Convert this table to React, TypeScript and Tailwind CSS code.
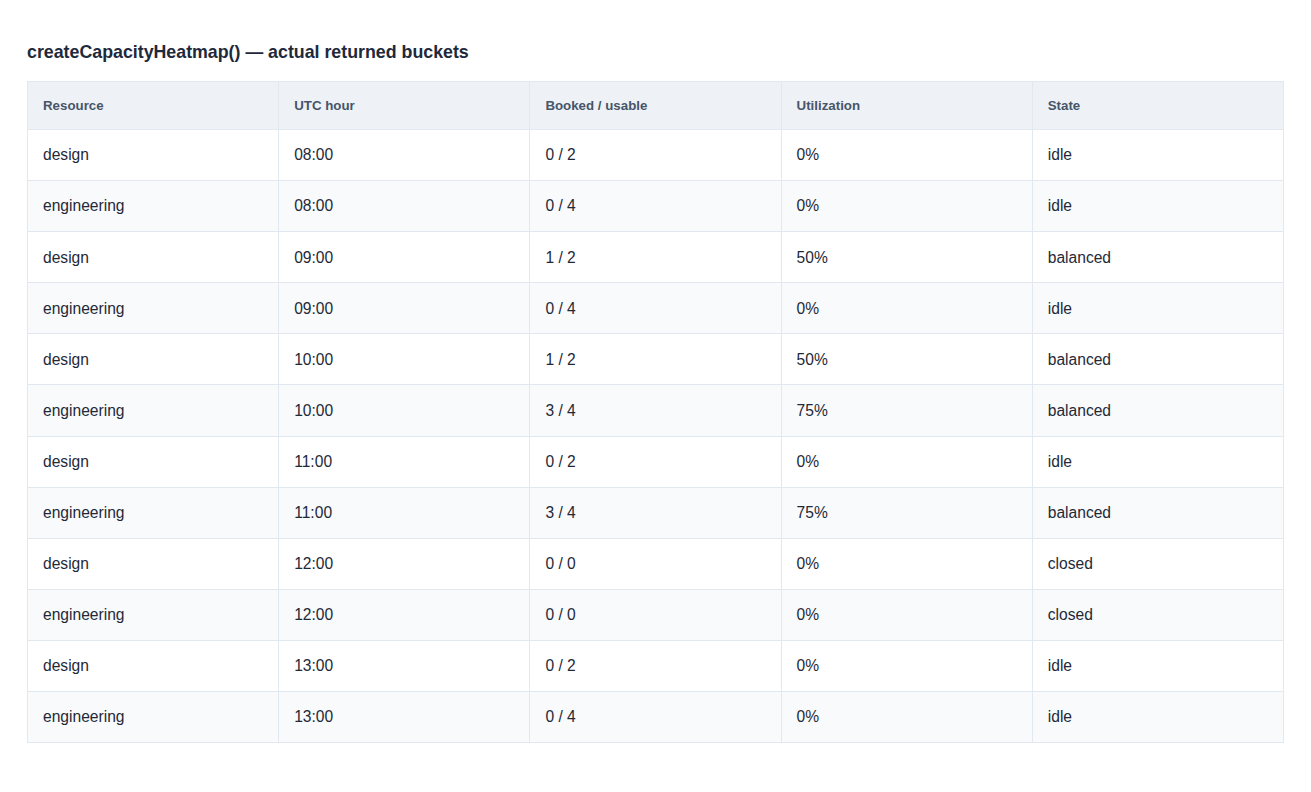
import React from 'react';

const rows = [
  ['design', '08:00', '0 / 2', '0%', 'idle'],
  ['engineering', '08:00', '0 / 4', '0%', 'idle'],
  ['design', '09:00', '1 / 2', '50%', 'balanced'],
  ['engineering', '09:00', '0 / 4', '0%', 'idle'],
  ['design', '10:00', '1 / 2', '50%', 'balanced'],
  ['engineering', '10:00', '3 / 4', '75%', 'balanced'],
  ['design', '11:00', '0 / 2', '0%', 'idle'],
  ['engineering', '11:00', '3 / 4', '75%', 'balanced'],
  ['design', '12:00', '0 / 0', '0%', 'closed'],
  ['engineering', '12:00', '0 / 0', '0%', 'closed'],
  ['design', '13:00', '0 / 2', '0%', 'idle'],
  ['engineering', '13:00', '0 / 4', '0%', 'idle'],
];

const headers = ['Resource', 'UTC hour', 'Booked / usable', 'Utilization', 'State'];

const App = () => {
  return (
    <div className="min-h-screen bg-white px-[27px] pt-[41px] font-['Liberation_Sans',Arial,sans-serif]">
      <h2 className="text-[17.8px] leading-[22px] font-bold text-[#1e293b] mb-[18px]">
        createCapacityHeatmap() — actual returned buckets
      </h2>
      <table className="w-[1257px] table-fixed border-collapse border border-[#e2e8f0]">
        <thead>
          <tr className="bg-[#eef2f7]">
            {headers.map((h) => (
              <th
                key={h}
                className="h-[48px] border border-[#e2e8f0] px-[15px] text-left text-[13.3px] font-bold text-[#475569]"
              >
                {h}
              </th>
            ))}
          </tr>
        </thead>
        <tbody>
          {rows.map((r, i) => (
            <tr key={i} className={i % 2 === 1 ? 'bg-[#f8fafc]' : 'bg-white'}>
              {r.map((c, j) => (
                <td
                  key={j}
                  className="h-[51.1px] border border-[#e2e8f0] px-[15px] text-[15.6px] text-[#1f2937]"
                >
                  {c}
                </td>
              ))}
            </tr>
          ))}
        </tbody>
      </table>
    </div>
  );
};

export default App;
